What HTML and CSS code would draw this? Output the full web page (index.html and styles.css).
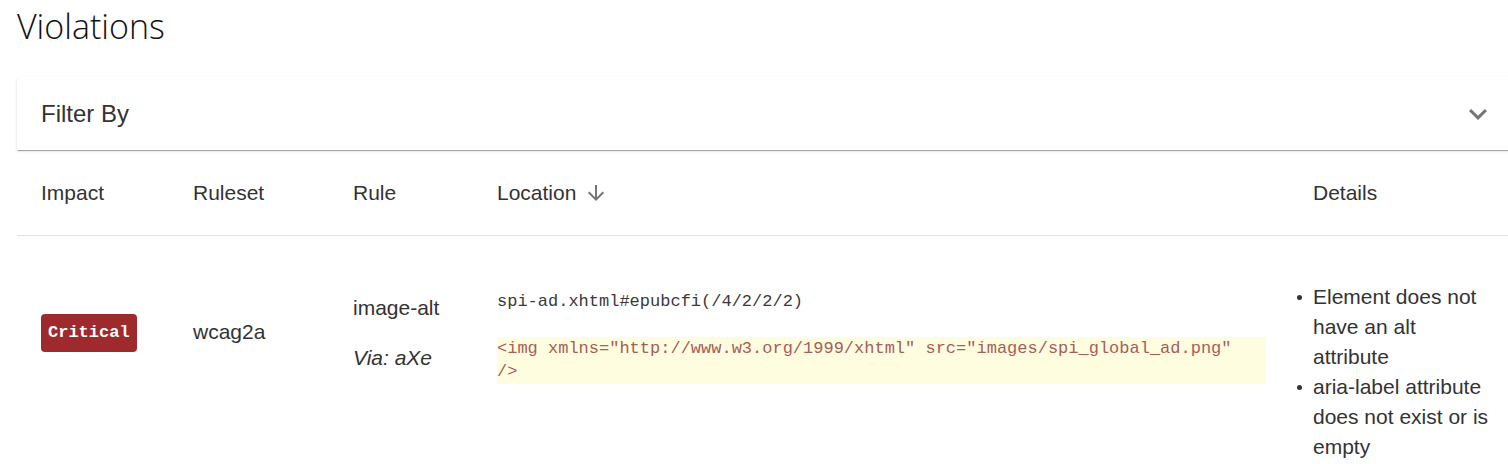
FILE: index.html
```html
<!DOCTYPE html>
<html lang="en">
<head>
<meta charset="utf-8">
<title>Violations</title>
<link rel="stylesheet" href="styles.css">
</head>
<body>
<main class="page">
  <h1 class="title">Violations</h1>

  <section class="filter">
    <span class="filter-label">Filter By</span>
    <svg class="chevron" viewBox="0 0 24 24" aria-hidden="true"><path d="M16.59 8.59 12 13.17 7.41 8.59 6 10l6 6 6-6z"/></svg>
  </section>

  <div class="table">
    <div class="row head">
      <div class="cell">Impact</div>
      <div class="cell">Ruleset</div>
      <div class="cell">Rule</div>
      <div class="cell sort">Location
        <svg class="arrow" viewBox="0 0 24 24" aria-hidden="true"><path d="M20 12l-1.41-1.41L13 16.17V4h-2v12.17l-5.58-5.59L4 12l8 8 8-8z"/></svg>
      </div>
      <div class="cell">Details</div>
    </div>

    <div class="row body">
      <div class="cell impact"><span class="badge">Critical</span></div>
      <div class="cell ruleset">wcag2a</div>
      <div class="cell rule">
        <div class="rule-name">image-alt</div>
        <div class="via">Via: aXe</div>
      </div>
      <div class="cell location">
        <div class="cfi">spi-ad.xhtml#epubcfi(/4/2/2/2)</div>
        <pre class="snippet">&lt;img xmlns="http://www.w3.org/1999/xhtml" src="images/spi_global_ad.png"
/&gt;</pre>
      </div>
      <div class="cell details">
        <ul>
          <li>Element does not have an alt attribute</li>
          <li>aria-label attribute does not exist or is empty</li>
        </ul>
      </div>
    </div>
  </div>
</main>
</body>
</html>
```

FILE: styles.css
```css
html, body {
  margin: 0;
  padding: 0;
  background: #fff;
  overflow: hidden;
}

body {
  font-family: "Liberation Sans", Arial, sans-serif;
  color: #333;
}

.page {
  width: 1503px;
  padding-left: 17px;
}

.title {
  margin: 0;
  padding-top: 2px;
  font-family: "Open Sans", "Noto Sans", sans-serif;
  font-weight: 300;
  font-size: 34px;
  line-height: 48px;
  color: #111;
}

.filter {
  margin-top: 27px;
  height: 73px;
  display: flex;
  align-items: center;
  justify-content: space-between;
  padding: 0 24px;
  background: #fff;
  border-radius: 4px 4px 0 0;
  box-shadow: 0 2px 1px -1px rgba(0,0,0,0.2), 0 1px 1px 0 rgba(0,0,0,0.14), 0 1px 3px 0 rgba(0,0,0,0.12);
}

.filter-label {
  font-size: 24px;
  color: #333;
}

.chevron {
  width: 36px;
  height: 36px;
  fill: #757575;
}

.row {
  display: grid;
  grid-template-columns: 152px 160px 144px 816px 1fr;
}

.cell {
  padding-left: 24px;
  font-size: 21px;
}

.head {
  height: 85px;
  align-items: center;
  border-bottom: 1px solid #e0e0e0;
}

.head .cell {
  line-height: 24px;
  padding-top: 1px;
}

.sort {
  display: flex;
  align-items: center;
}

.arrow {
  width: 24px;
  height: 24px;
  margin-left: 8px;
  fill: #757575;
}

.body {
  align-items: start;
}

.impact {
  padding-top: 78px;
}

.badge {
  display: inline-block;
  height: 38px;
  line-height: 38px;
  padding: 0 7px;
  background: #9e2a2e;
  color: #fff;
  border-radius: 4px;
  font-family: "Liberation Mono", "Courier New", monospace;
  font-weight: bold;
  font-size: 17px;
}

.ruleset {
  padding-top: 84px;
  line-height: 24px;
}

.rule {
  padding-top: 60px;
  line-height: 24px;
}

.via {
  margin-top: 26px;
  font-style: italic;
}

.location {
  padding-top: 57px;
  padding-right: 23px;
  font-family: "Liberation Mono", "Courier New", monospace;
  font-size: 17px;
}

.cfi {
  line-height: 18px;
  font-size: 17px;
  color: #3a3a3a;
}

.snippet {
  margin: 26px 0 0;
  padding: 0;
  height: 47px;
  line-height: 23px;
  background: #fffde0;
  color: #a65e58;
  font-family: "Liberation Mono", "Courier New", monospace;
  font-size: 17px;
  white-space: pre-wrap;
}

.details {
  padding-top: 46px;
  padding-left: 24px;
}

.details ul {
  margin: 0;
  padding-left: 0;
  list-style: none;
  width: 179px;
}

.details li {
  position: relative;
  line-height: 30px;
}

.details li::before {
  content: "";
  position: absolute;
  left: -16px;
  top: 13px;
  width: 5px;
  height: 5px;
  border-radius: 50%;
  background: #333;
}
```
